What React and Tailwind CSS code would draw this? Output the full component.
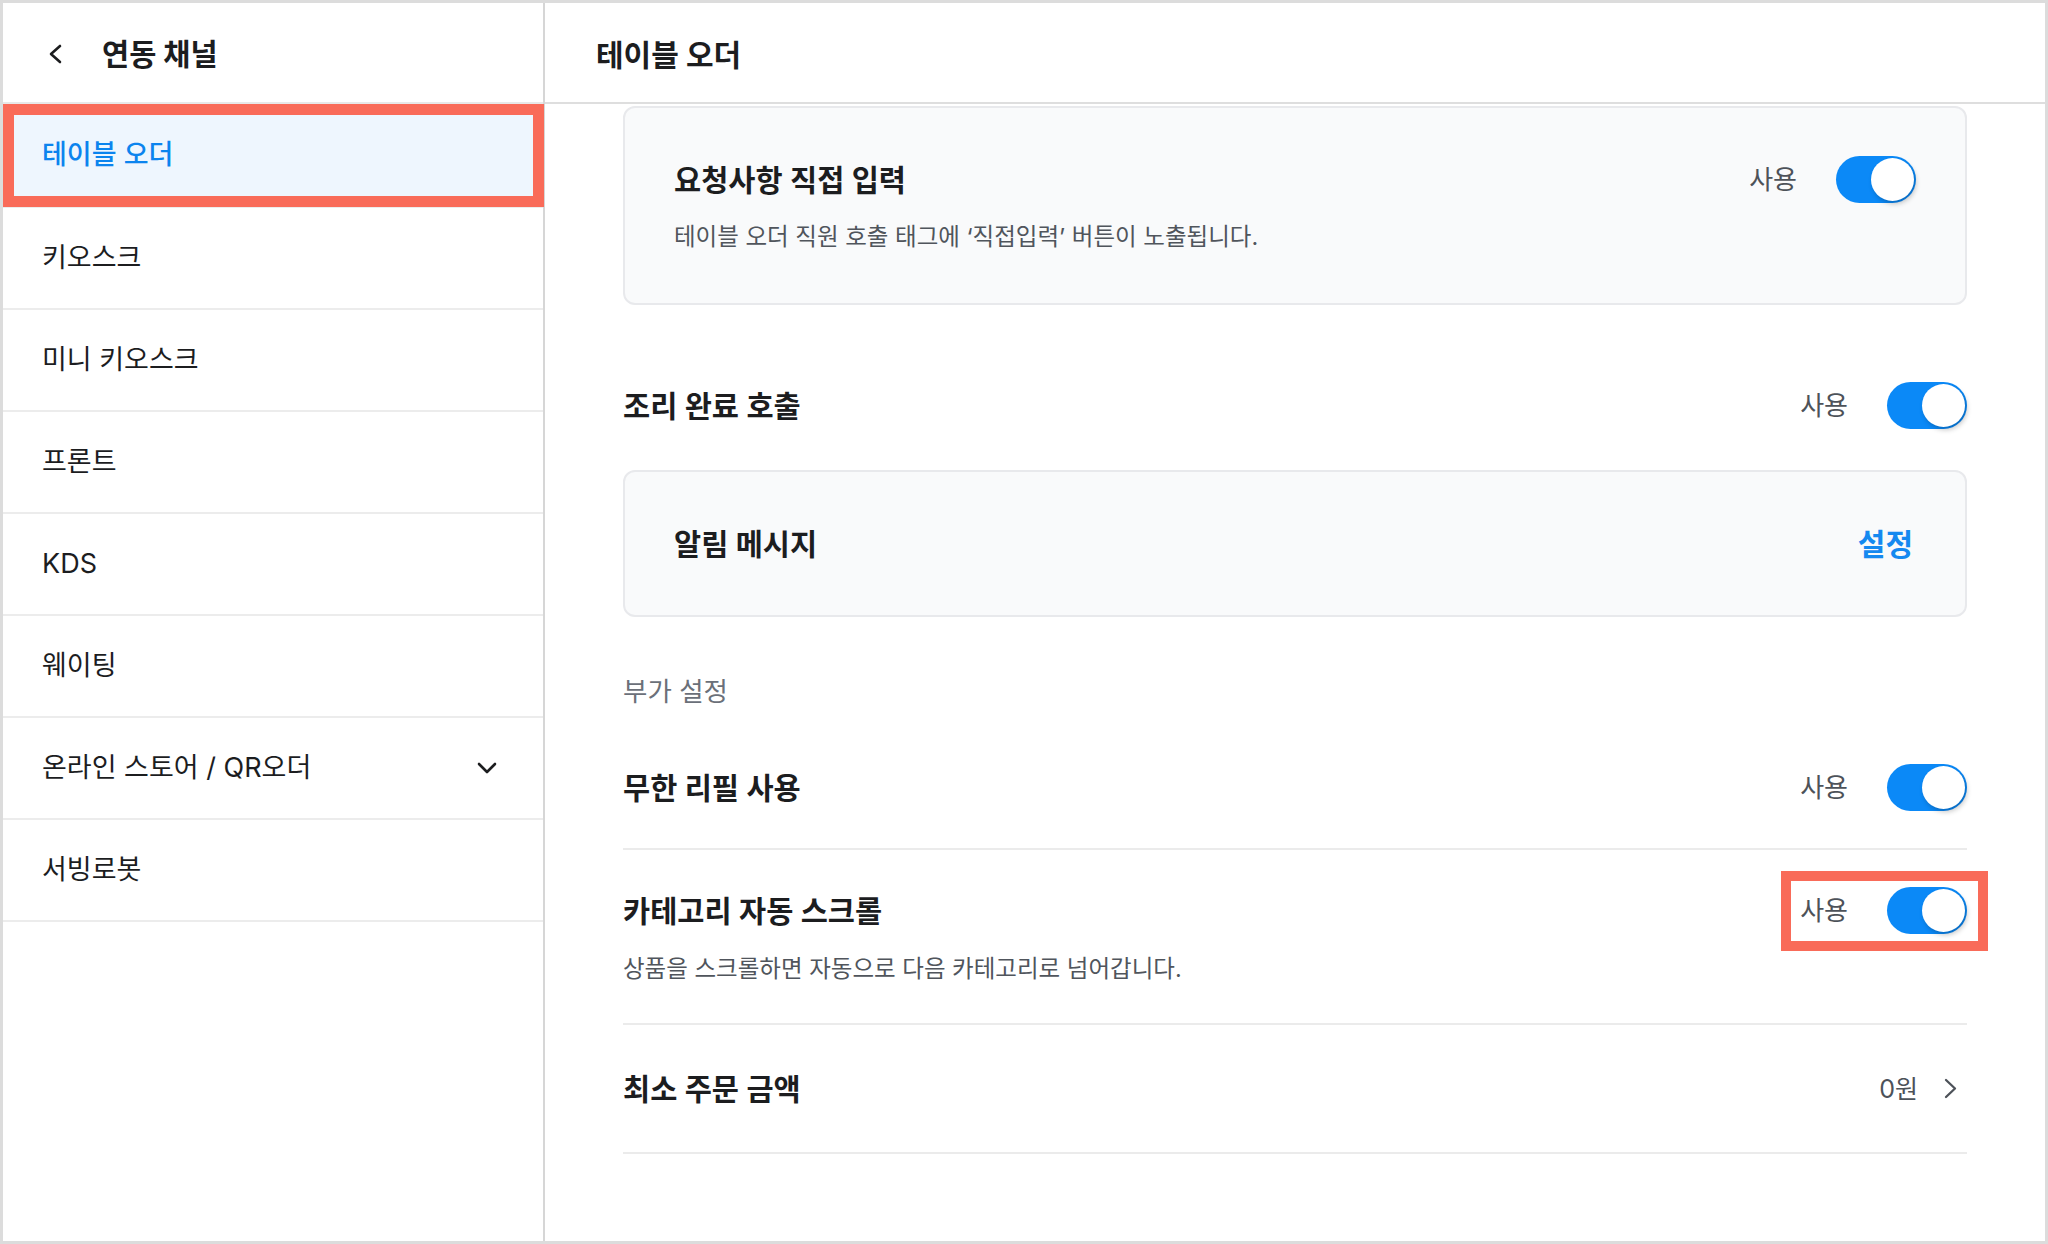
import React from "react";

const FONT = "font-['Inter','Noto_Sans_CJK_KR',sans-serif]";

function Toggle() {
  return (
    <div className="relative w-[80px] h-[47px] rounded-full bg-[#0b89f7] shrink-0">
      <div className="absolute right-[2px] top-[2px] w-[43px] h-[43px] rounded-full bg-white shadow-[2px_3px_5px_rgba(0,0,0,0.22)]" />
    </div>
  );
}

function UseToggle() {
  return (
    <div className="flex items-center gap-[39px]">
      <span className="text-[26px] leading-[34px] text-[#4d5259]">사용</span>
      <Toggle />
    </div>
  );
}

const items = ["키오스크", "미니 키오스크", "프론트", "KDS", "웨이팅", "온라인 스토어 / QR오더", "서빙로봇"];

export default function App() {
  return (
    <div className={`${FONT} w-[2048px] h-[1244px] border-[3px] border-[#dcdcdc] bg-white flex text-[#1c1d1f]`}>
      {/* Sidebar */}
      <aside className="w-[542px] shrink-0 border-r-2 border-[#d6d6d6] flex flex-col">
        <div className="h-[101px] border-b-2 border-[#e8e8e8] flex items-center pl-[45px]">
          <svg width="14" height="20" viewBox="0 0 14 20" fill="none" className="mt-[2px]">
            <polyline points="12,2 3,10 12,18" stroke="#1c1d1f" strokeWidth="2.6" strokeLinecap="round" strokeLinejoin="round" />
          </svg>
          <span className="ml-[40px] text-[29.5px] leading-[38px] font-bold mt-[2px]">연동 채널</span>
        </div>
        <div className="relative h-[102px] bg-[#eef6fe] flex items-center pl-[39px]">
          <span className="text-[27px] leading-[36px] text-[#0b84ee] font-medium">테이블 오더</span>
          <div className="absolute left-0 top-0 -right-[1px] -bottom-[1px] border-[11px] border-[#f96b59]" />
        </div>
        {items.map((t, i) => (
          <div key={i} className="h-[102px] border-t-2 border-[#ececec] flex items-center justify-between pl-[39px] pr-[46px]">
            <span className="text-[27px] leading-[36px] text-[#1c1d1f]">{t}</span>
            {t.startsWith("온라인") && (
              <svg width="20" height="14" viewBox="0 0 20 14" fill="none">
                <polyline points="2,3 10,11 18,3" stroke="#1c1d1f" strokeWidth="2.6" strokeLinecap="round" strokeLinejoin="round" />
              </svg>
            )}
          </div>
        ))}
        <div className="border-t-2 border-[#ececec]" />
      </aside>

      {/* Main */}
      <main className="flex-1 flex flex-col min-w-0">
        <div className="h-[101px] shrink-0 border-b-2 border-[#dedede] flex items-center pl-[51px]">
          <span className="text-[30px] leading-[38px] font-bold mt-[4px]">테이블 오더</span>
        </div>
        <div className="px-[78px] pt-[2px] flex flex-col">
          {/* Card 1 */}
          <div className="h-[199px] rounded-[12px] border-2 border-[#e8e9ec] bg-[#f9fafb] px-[49px] pt-[48px]">
            <div className="flex items-center justify-between h-[47px]">
              <span className="text-[29.5px] leading-[38px] font-semibold">요청사항 직접 입력</span>
              <UseToggle />
            </div>
            <p className="mt-[18px] text-[23.5px] leading-[32px] text-[#50555c]">
              테이블 오더 직원 호출 태그에 ‘직접입력’ 버튼이 노출됩니다.
            </p>
          </div>

          {/* Row 조리 완료 호출 */}
          <div className="mt-[77px] h-[47px] flex items-center justify-between">
            <span className="text-[29.5px] leading-[38px] font-semibold">조리 완료 호출</span>
            <UseToggle />
          </div>

          {/* Card 2 */}
          <div className="mt-[41px] h-[147px] rounded-[12px] border-2 border-[#e8e9ec] bg-[#f9fafb] px-[49px] flex items-center justify-between">
            <span className="text-[29.5px] leading-[38px] font-semibold">알림 메시지</span>
            <span className="text-[30px] leading-[38px] font-bold text-[#1589f0] mr-[3px]">설정</span>
          </div>

          <div className="mt-[58px] text-[26.5px] leading-[32px] text-[#6b7079]">부가 설정</div>

          {/* Row 무한 리필 */}
          <div className="mt-[20px] py-[37px] border-b-2 border-[#ebebeb]">
            <div className="h-[47px] flex items-center justify-between">
              <span className="text-[29.5px] leading-[38px] font-semibold">무한 리필 사용</span>
              <UseToggle />
            </div>
          </div>

          {/* Row 카테고리 자동 스크롤 */}
          <div className="pt-[37px] pb-[38px] border-b-2 border-[#ebebeb]">
            <div className="h-[47px] flex items-center justify-between">
              <span className="text-[29.5px] leading-[38px] font-semibold">카테고리 자동 스크롤</span>
              <div className="relative">
                <UseToggle />
                <div className="absolute -left-[19px] -right-[21px] -top-[16px] -bottom-[17px] border-[10px] border-[#f96b59]" />
              </div>
            </div>
            <p className="mt-[19px] text-[23.5px] leading-[32px] text-[#50555c]">
              상품을 스크롤하면 자동으로 다음 카테고리로 넘어갑니다.
            </p>
          </div>

          {/* Row 최소 주문 금액 */}
          <div className="py-[40px] border-b-2 border-[#ebebeb]">
            <div className="h-[47px] flex items-center justify-between">
              <span className="text-[29.5px] leading-[38px] font-semibold">최소 주문 금액</span>
              <div className="flex items-center gap-[26px] pr-[10px]">
                <span className="text-[25px] leading-[32px] text-[#4d5259]">0원</span>
                <svg width="13" height="21" viewBox="0 0 13 21" fill="none">
                  <polyline points="2,2 11,10.5 2,19" stroke="#4d5259" strokeWidth="2.3" strokeLinecap="round" strokeLinejoin="round" />
                </svg>
              </div>
            </div>
          </div>
        </div>
      </main>
    </div>
  );
}
